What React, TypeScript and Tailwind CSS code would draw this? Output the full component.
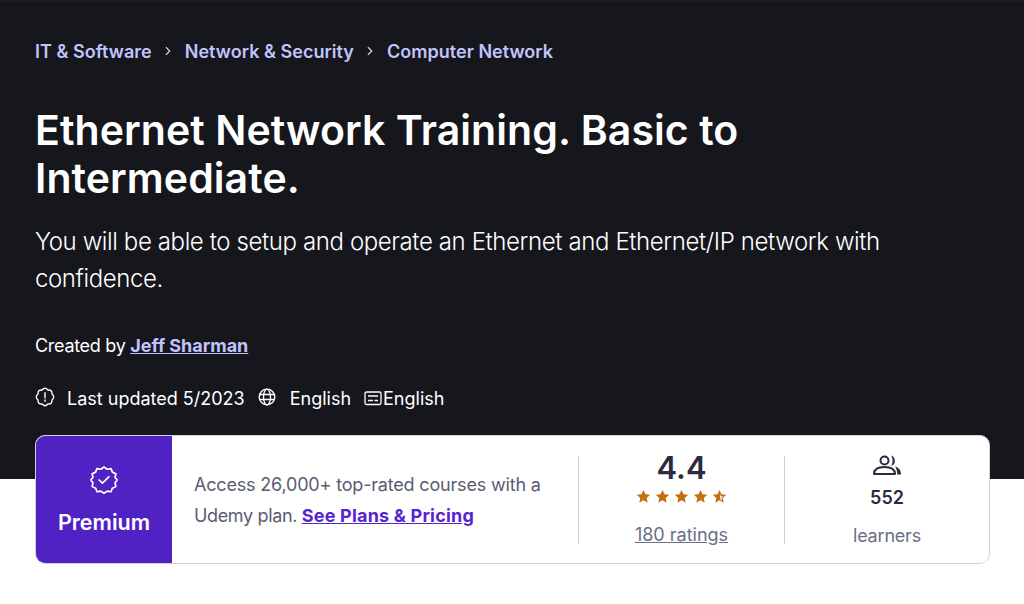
import React from "react";
import { ChevronRight } from "lucide-react";

function Star({ half = false }: { half?: boolean }) {
  return (
    <svg width="15" height="15" viewBox="0 0 24 24">
      {half ? (
        <>
          <path d="M12 1.500l3.200 7 7.600.8-5.700 5.100 1.600 7.500L12 18.100l-6.700 3.800 1.600-7.500L1.200 9.300l7.600-.8z" fill="#c4710d" />
          <path d="M12.600 7.500l1.500 3.900 3.900.4-3 2.600.9 4-2.600-1.600z" fill="#fff" />
        </>
      ) : (
        <path d="M12 1.500l3.200 7 7.600.8-5.700 5.100 1.600 7.500L12 18.100l-6.700 3.800 1.600-7.500L1.200 9.300l7.600-.8z" fill="#c4710d" />
      )}
    </svg>
  );
}

function Badge() {
  return (
    <svg width="28" height="28" viewBox="1 1 26 26" fill="none" stroke="#fff" strokeWidth="1.600" strokeLinejoin="round" strokeLinecap="round">
      <path d="M14 2l3 2 3.500-.6 1.300 3.300 3.200 1.500-.7 3.500 2 2.300-2 2.600.7 3.500-3.200 1.500-1.300 3.300-3.500-.6-3 2-3-2-3.500.6-1.300-3.300-3.200-1.500.7-3.500-2-2.600 2-2.300-.7-3.500 3.200-1.500 1.300-3.300 3.500.6z" />
      <path d="M9.500 14l3 3 6-6" />
    </svg>
  );
}

export default function App() {
  return (
    <div className="w-[1024px] h-[604px] overflow-hidden bg-white font-['Inter',sans-serif]">
      <div className="h-[479px] bg-[#16161d] border-t-2 border-[#1a1a2b] px-[35px] pt-[37px]">
        <nav className="flex items-center h-[24px] text-[#c0c4fc] text-[18px] font-semibold tracking-[0.03px]">
          <span>IT &amp; Software</span>
          <ChevronRight className="w-[14px] h-[14px] text-[#d1d2e0] mx-[9.500px]" />
          <span>Network &amp; Security</span>
          <ChevronRight className="w-[14px] h-[14px] text-[#d1d2e0] mx-[9.500px]" />
          <span>Computer Network</span>
        </nav>
        <h1 className="mt-[43px] text-white text-[41px] leading-[48px] font-semibold w-[800px] tracking-[0.08px]">
          Ethernet Network Training. Basic to Intermediate.
        </h1>
        <p className="mt-[21px] text-white text-[24px] leading-[37px] font-light w-[900px] tracking-[-0.39px]">
          You will be able to setup and operate an Ethernet and Ethernet/IP network with confidence.
        </p>
        <div className="mt-[36px] text-white text-[18px] leading-[26px] tracking-[-0.3px]">
          Created by <a className="font-bold text-[#c0c4fc] underline tracking-[0px]">Jeff Sharman</a>
        </div>
        <div className="mt-[26px] flex items-center h-[26px] text-white text-[18px]">
          <svg width="20" height="20" viewBox="0 0 20 20" fill="none" stroke="#fff" strokeWidth="1.400" className="mr-[12px] -mt-[2px]">
            <path d="M17.020 7.090Q20.400 10 17.020 12.910Q17.300 17.300 12.910 17.020Q10 20.400 7.090 17.020Q2.700 17.300 2.980 12.910Q-.4 10 2.980 7.090Q2.700 2.700 7.090 2.980Q10 -.4 12.910 2.980Q17.300 2.700 17.020 7.090Z" strokeLinejoin="round" />
            <path d="M10 5.800v5M10 12.900v1.300" strokeLinecap="round" />
          </svg>
          <span>Last updated 5/2023</span>
          <svg width="20" height="20" viewBox="0 0 20 20" fill="none" stroke="#fff" strokeWidth="1.300" className="ml-[12px] mr-[13px] -mt-[2px]">
            <circle cx="10" cy="10" r="7.800" />
            <ellipse cx="10" cy="10" rx="3.500" ry="7.800" />
            <path d="M2.500 7.500h15M2.500 12.500h15" />
          </svg>
          <span>English</span>
          <svg width="20" height="20" viewBox="0 0 20 20" fill="none" stroke="#fff" strokeWidth="1.300" className="ml-[12px] -mt-[1px]">
            <rect x="2" y="4" width="16" height="12.500" rx="1.500" />
            <path d="M5 8h10M5 12.500h5M11.500 12.500h3.500" />
          </svg>
          <span>English</span>
        </div>
      </div>
      <div className="-mt-[44px] mx-[35px] w-[955px] h-[129px] flex bg-white rounded-[10px] border border-[#d1d2e0] overflow-hidden">
        <div className="w-[136px] bg-[#5022c3] flex flex-col items-center text-white">
          <div className="mt-[30px] h-[28px]"><Badge /></div>
          <div className="mt-[14px] text-[21.500px] leading-[28px] font-semibold">Premium</div>
        </div>
        <div className="w-[406px] pl-[22px] pt-[33px] text-[18px] leading-[31px] text-[#595c73] tracking-[-0.18px]">
          Access 26,000+ top-rated courses with a<br />
          <span className="tracking-[-0.35px]">Udemy plan. </span><a className="font-bold text-[#5624d0] underline tracking-[0.2px]">See Plans &amp; Pricing</a>
        </div>
        <div className="flex-1 flex items-center">
          <div className="w-[206px] h-[88px] border-l border-[#d1d2e0] flex flex-col items-center">
            <div className="-mt-[8px] text-[31px] leading-[40px] font-semibold text-[#2a2b3f]">4.4</div>
            <div className="flex gap-[4px] mt-[1px]"><Star /><Star /><Star /><Star /><Star half /></div>
            <a className="mt-[19px] text-[18px] leading-[24px] text-[#6a6f85] underline">180 ratings</a>
          </div>
          <div className="flex-1 h-[88px] border-l border-[#d1d2e0] flex flex-col items-center">
            <svg width="28" height="20" viewBox="0 0 28 20" className="-mt-[1px] shrink-0" fill="none" stroke="#2a2b3f" strokeWidth="2">
              <circle cx="11.500" cy="5.500" r="4" />
              <path d="M1 19c0-4.500 3.500-7 10.500-7s10.500 2.500 10.500 7z" strokeLinejoin="round" />
              <path d="M18 .5a5.500 5.500 0 010 10.500c1.200-2 1.600-3.500 1.600-5.300 0-2-.5-3.600-1.600-5.200z" fill="#2a2b3f" stroke="none" />
              <path d="M22 11.500c3.800.8 6 3.600 6 8h-3.800c0-3.500-.8-6-2.200-8z" fill="#2a2b3f" stroke="none" />
            </svg>
            <div className="mt-[11px] text-[18px] leading-[24px] font-semibold text-[#2a2b3f]">552</div>
            <div className="mt-[14px] text-[18px] leading-[24px] tracking-[-0.2px] text-[#6a6f85]">learners</div>
          </div>
        </div>
      </div>
    </div>
  );
}
